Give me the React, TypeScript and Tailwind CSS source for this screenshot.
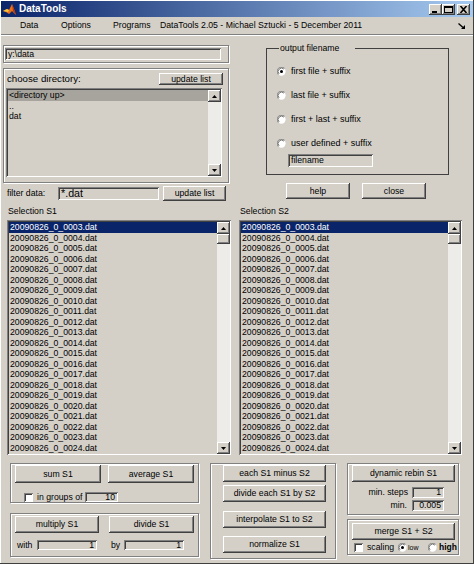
import React from "react";

const RAISED =
  "bg-[#d4d0c8] shadow-[inset_-1px_-1px_0_#404040,inset_1px_1px_0_#ffffff,inset_-2px_-2px_0_#808080]";
const SUNKEN =
  "bg-[#d4d0c8] shadow-[inset_1px_1px_0_#808080,inset_-1px_-1px_0_#ffffff,inset_2px_2px_0_#404040]";
const ETCHED =
  "border border-[#808080] shadow-[inset_1px_1px_0_#ffffff,1px_1px_0_#ffffff]";

function Btn({ children, className }: { children: React.ReactNode; className: string }) {
  return (
    <div className={`${RAISED} flex shrink-0 items-center justify-center leading-none whitespace-nowrap ${className}`}>
      {children}
    </div>
  );
}

function Field({
  children,
  className,
  right,
}: {
  children: React.ReactNode;
  className: string;
  right?: boolean;
}) {
  return (
    <div
      className={`${SUNKEN} flex shrink-0 items-center leading-none whitespace-nowrap overflow-hidden ${
        right ? "justify-end pr-[3px]" : "pl-[3px]"
      } ${className}`}
    >
      {children}
    </div>
  );
}

function Arrow({ up }: { up?: boolean }) {
  return (
    <div className={`${RAISED} w-[13px] h-[12px] flex items-center justify-center shrink-0`}>
      <svg width="5" height="3" viewBox="0 0 5 3">
        <path d={up ? "M2.5 0 L5 3 L0 3Z" : "M0 0 L5 0 L2.5 3Z"} fill="#000" />
      </svg>
    </div>
  );
}

function ScrollBar({ thumb }: { thumb?: boolean }) {
  return (
    <div className="w-[13px] flex flex-col bg-[#eeece8] shrink-0">
      <Arrow up />
      {thumb && <div className={`${RAISED} h-[10px] shrink-0`} />}
      <div className="flex-1" />
      <Arrow />
    </div>
  );
}

function ListBox({
  items,
  sel,
  selClass,
  className,
  thumb,
}: {
  items: string[];
  sel: number;
  selClass: string;
  className: string;
  thumb?: boolean;
}) {
  return (
    <div className={`${SUNKEN} flex pl-[2px] pt-[2px] pr-[1px] pb-[1px] ${className}`}>
      <div className="flex-1 overflow-hidden">
        {items.map((t, i) => (
          <div
            key={i}
            className={`h-[10.5px] leading-[10.5px] whitespace-nowrap pl-[1px] ${i === sel ? selClass : ""}`}
          >
            {t}
          </div>
        ))}
      </div>
      <ScrollBar thumb={thumb} />
    </div>
  );
}

function Radio({ on }: { on?: boolean }) {
  return (
    <svg width="9" height="9" viewBox="0 0 12 12" className="shrink-0">
      <circle cx="6" cy="6" r="5.5" fill="#ffffff" />
      <path d="M10.2 1.8 A5.5 5.5 0 0 0 1.8 10.2" stroke="#808080" strokeWidth="1.2" fill="none" />
      <path d="M9.2 2.8 A4.3 4.3 0 0 0 2.8 9.2" stroke="#404040" strokeWidth="1" fill="none" />
      {on && <circle cx="6" cy="6" r="2" fill="#000" />}
    </svg>
  );
}

function Check() {
  return <div className={`${SUNKEN} !bg-white w-[9px] h-[9px] shrink-0`} />;
}

function WinBtn({ kind, className = "" }: { kind: "min" | "max" | "close"; className?: string }) {
  return (
    <div className={`${RAISED} w-[13px] h-[11px] flex items-center justify-center ${className}`}>
      <svg width="9" height="7" viewBox="0 0 9 7">
        {kind === "min" && <rect x="1" y="5" width="5" height="2" fill="#000" />}
        {kind === "max" && (
          <>
            <rect x="0.5" y="0.5" width="8" height="6" fill="none" stroke="#000" />
            <rect x="0" y="0" width="9" height="2" fill="#000" />
          </>
        )}
        {kind === "close" && (
          <path d="M1.5 0 L7.5 7 M7.5 0 L1.5 7" stroke="#000" strokeWidth="1.6" fill="none" />
        )}
      </svg>
    </div>
  );
}

function Logo() {
  return (
    <svg width="13" height="13" viewBox="0 0 13 13">
      <path d="M0 8 L4 6 L6 7 L9 1 L11 6 L13 12 L9 8 L6 11 L3 9 Z" fill="#e8701a" />
      <path d="M9 1 L11 6 L13 12 L10 8 Z" fill="#b8340c" />
      <path d="M4 6 L6 7 L5 9 L0 8 Z" fill="#f6c53a" />
    </svg>
  );
}

export default function App() {
  const files = Array.from({ length: 22 }, (_, i) => `20090826_0_${String(i + 3).padStart(4, "0")}.dat`);
  return (
    <div className="w-[474px] h-[564px] overflow-hidden bg-[#d4d0c8] p-[1px] font-['Liberation_Sans',Arial,sans-serif] text-[8.7px] text-black flex flex-col shadow-[inset_-1px_-1px_0_#404040,inset_1px_1px_0_#ffffff]">
      {/* title bar */}
      <div className="h-[16px] shrink-0 flex items-center bg-[linear-gradient(to_right,#0a246a,#a6caf0)]">
        <div className="ml-[2px] w-[13px] h-[13px]">
          <Logo />
        </div>
        <span className="ml-[3px] text-white font-bold text-[10px] leading-none">DataTools</span>
        <div className="ml-auto mr-[3px] flex">
          <WinBtn kind="min" />
          <WinBtn kind="max" />
          <WinBtn kind="close" className="ml-[2px]" />
        </div>
      </div>

      {/* menu bar */}
      <div className="h-[17px] shrink-0 flex items-center pl-[19px] leading-none">
        <span className="w-[41px]">Data</span>
        <span className="w-[52px]">Options</span>
        <span className="w-[47px]">Programs</span>
        <span>DataTools 2.05 - Michael Sztucki - 5 December 2011</span>
        <svg width="7" height="6" viewBox="0 0 7 6" className="ml-auto mr-[8px]">
          <path d="M0.5 0.5 L5 4.5" stroke="#000" strokeWidth="1.3" />
          <path d="M7 6 L7 2 L3 6 Z" fill="#000" />
        </svg>
      </div>
      <div className="h-[2px] shrink-0 border-t border-[#808080] border-b border-b-white" />

      {/* top section */}
      <div className="flex shrink-0">
        <div className="ml-[2px] w-[226px] flex flex-col">
          <div className={`${ETCHED} mt-[9px] h-[18px]`}>
            <Field className="ml-[1px] mt-[2px] w-[216px] h-[12px]">y:\data</Field>
          </div>
          <div className={`${ETCHED} mt-[5px] h-[115px] flex flex-col`}>
            <div className="flex items-center mt-[4px] h-[12px] pl-[3px] pr-[5px]">
              <span className="leading-none text-[9.7px]">choose directory:</span>
              <Btn className="ml-auto w-[64px] h-[12px]">update list</Btn>
            </div>
            <ListBox
              items={["<directory up>", "..", "dat"]}
              sel={0}
              selClass="bg-[#a7a49d]"
              className="ml-[2px] mt-[3px] w-[216px] h-[89px]"
            />
          </div>
          <div className="mt-[3px] h-[15px] flex items-center">
            <span className="pl-[4px] w-[55px] leading-none">filter data:</span>
            <Field className="w-[101px] h-[13px] text-[10.7px]">*.dat</Field>
            <Btn className="ml-[4px] w-[63px] h-[15px]">update list</Btn>
          </div>
        </div>

        <div className="ml-[37px] w-[183px] flex flex-col">
          <div className="mt-[12px] h-[127px] border border-[#404040] relative flex flex-col">
            <span className="absolute left-[12px] -top-[6px] bg-[#d4d0c8] pl-[1px] pr-[16px] leading-[11px]">
              output filename
            </span>
            <div className="pt-[16px] pl-[10px] flex flex-col gap-[12.3px] text-[9px]">
              {[
                ["first file + suffix", true],
                ["last file + suffix", false],
                ["first + last + suffix", false],
                ["user defined + suffix", false],
              ].map(([t, on], i) => (
                <div key={i} className="h-[12px] flex items-center gap-[5px] leading-none">
                  <Radio on={on as boolean} />
                  <span>{t as string}</span>
                </div>
              ))}
            </div>
            <Field className="ml-[21px] mt-[4px] w-[85px] h-[13px]">filename</Field>
          </div>
          <div className="mt-[8px] flex">
            <Btn className="ml-[20px] w-[64px] h-[16px]">help</Btn>
            <Btn className="ml-[12px] w-[64px] h-[16px]">close</Btn>
          </div>
        </div>
      </div>

      {/* selections */}
      <div className="mt-[5px] flex shrink-0">
        <div className="ml-[6px] w-[224px] flex flex-col">
          <div className="pl-[1px] h-[11px] leading-[11px]">Selection S1</div>
          <ListBox items={files} sel={0} selClass="bg-[#0a246a] text-white" className="mt-[3px] h-[235px]" thumb />
        </div>
        <div className="ml-[8px] w-[223px] flex flex-col">
          <div className="pl-[1px] h-[11px] leading-[11px]">Selection S2</div>
          <ListBox items={files} sel={0} selClass="bg-[#0a246a] text-white" className="mt-[3px] h-[235px]" thumb />
        </div>
      </div>

      {/* bottom */}
      <div className="mt-[8px] flex items-start shrink-0">
        <div className="ml-[9px] w-[189px] flex flex-col">
          <div className={`${ETCHED} h-[40px] flex flex-col`}>
            <div className="mt-[1px] flex">
              <Btn className="ml-[4px] w-[86px] h-[18px]">sum S1</Btn>
              <Btn className="ml-[7px] w-[86px] h-[18px]">average S1</Btn>
            </div>
            <div className="mt-[9px] h-[10px] flex items-center leading-none">
              <div className="ml-[13px]">
                <Check />
              </div>
              <span className="ml-[4px] w-[48px]">in groups of</span>
              <Field right className="w-[33px] h-[10px]">
                10
              </Field>
            </div>
          </div>
          <div className={`${ETCHED} mt-[10px] h-[44px] flex flex-col`}>
            <div className="mt-[2px] flex">
              <Btn className="ml-[4px] w-[84px] h-[17px]">multiply S1</Btn>
              <Btn className="ml-[10px] w-[85px] h-[17px]">divide S1</Btn>
            </div>
            <div className="mt-[7px] h-[10px] flex items-center leading-none">
              <span className="ml-[6px] w-[20px]">with</span>
              <Field right className="w-[60px] h-[10px]">
                1
              </Field>
              <span className="ml-[14px] w-[13px]">by</span>
              <Field right className="w-[60px] h-[10px]">
                1
              </Field>
            </div>
          </div>
        </div>

        <div className={`${ETCHED} ml-[11px] w-[126px] h-[96px] flex flex-col`}>
          <Btn className="ml-[12px] mt-[1px] w-[103px] h-[17px]">each S1 minus S2</Btn>
          <Btn className="ml-[12px] mt-[3px] w-[103px] h-[17px]">divide each S1 by S2</Btn>
          <Btn className="ml-[12px] mt-[9px] w-[103px] h-[17px]">interpolate S1 to S2</Btn>
          <Btn className="ml-[12px] mt-[8px] w-[103px] h-[17px]">normalize S1</Btn>
        </div>

        <div className="ml-[11px] w-[112px] flex flex-col">
          <div className={`${ETCHED} h-[52px] flex flex-col`}>
            <Btn className="ml-[4px] mt-[1px] w-[103px] h-[17px]">dynamic rebin S1</Btn>
            <div className="mt-[5px] h-[11px] flex items-center justify-end pr-[14px] leading-none">
              <span className="mr-[4px]">min. steps</span>
              <Field right className="w-[32px] h-[11px]">
                1
              </Field>
            </div>
            <div className="mt-[2px] h-[11px] flex items-center justify-end pr-[14px] leading-none">
              <span className="mr-[5px]">min.</span>
              <Field right className="w-[32px] h-[11px]">
                0.005
              </Field>
            </div>
          </div>
          <div className={`${ETCHED} mt-[4px] h-[36px] flex flex-col`}>
            <Btn className="ml-[4px] mt-[3px] w-[103px] h-[17px]">merge S1 + S2</Btn>
            <div className="mt-[2px] h-[10px] flex items-center leading-none">
              <div className="ml-[6px]">
                <Check />
              </div>
              <span className="ml-[4px] w-[31px]">scaling</span>
              <Radio on />
              <span className="ml-[1px] w-[20px] text-[7px]">low</span>
              <Radio />
              <span className="ml-[2px] text-[8.5px] font-bold">high</span>
            </div>
          </div>
        </div>
      </div>
    </div>
  );
}
